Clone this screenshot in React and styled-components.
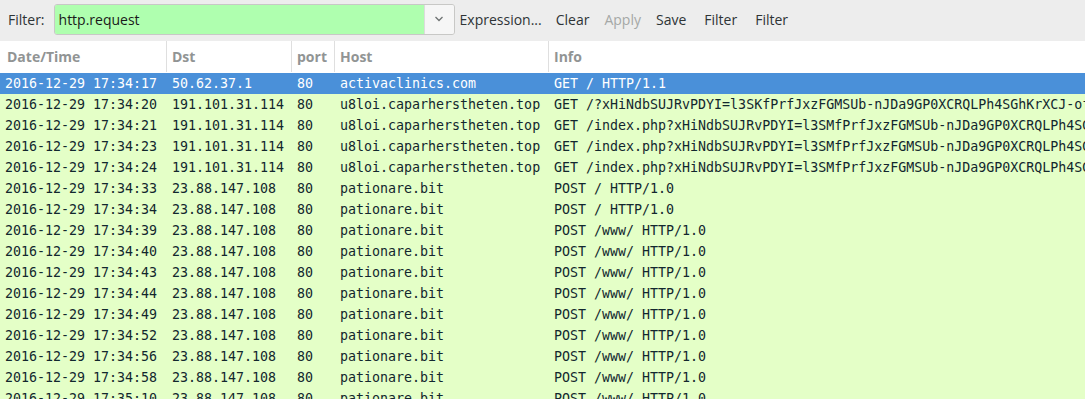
import React from "react";
import styled, { createGlobalStyle } from "styled-components";

const Global = createGlobalStyle`
  html, body { margin: 0; padding: 0; background: #ffffff; }
  body { overflow: hidden; }
`;

const Page = styled.div`
  width: 1085px;
  height: 399px;
  overflow: hidden;
  display: flex;
  flex-direction: column;
  background: #ffffff;
`;

const Toolbar = styled.div`
  height: 41px;
  flex: none;
  background: #ededed;
  display: flex;
  align-items: center;
  padding: 0 0 0 8px;
  font-family: "Open Sans", sans-serif;
  font-size: 14px;
  color: #2e3436;
  box-sizing: border-box;
`;

const Label = styled.span`
  margin-right: 9px;
  margin-top: -3px;
`;

const Combo = styled.div`
  display: flex;
  height: 31px;
  margin-top: -3px;
  border: 1px solid #c8c8c6;
  border-radius: 3px;
  overflow: hidden;
  box-sizing: border-box;
`;

const Input = styled.div`
  width: 369px;
  background: #afffaf;
  display: flex;
  align-items: center;
  padding-left: 4px;
  box-sizing: border-box;
  color: #1a1a1a;
`;

const Arrow = styled.div`
  width: 29px;
  background: #f6f6f6;
  border-left: 1px solid #dcdcdc;
  display: flex;
  align-items: center;
  justify-content: center;
`;

const Buttons = styled.div`
  display: flex;
  align-items: center;
  margin-left: 5px;
  margin-top: -3px;
`;

const Btn = styled.span`
  color: ${(p) => (p.$disabled ? "#a5a8a6" : "#2e3436")};
  margin-right: ${(p) => p.$mr || 15}px;
  white-space: nowrap;
`;

const Header = styled.div`
  height: 32px;
  flex: none;
  display: flex;
  background: #ffffff;
  box-sizing: border-box;
  font-family: "Open Sans", sans-serif;
  font-weight: 700;
  font-size: 14px;
  color: #919494;
`;

const HeadCell = styled.div`
  width: ${(p) => (p.$w ? p.$w + "px" : "auto")};
  flex: ${(p) => (p.$w ? "none" : "1")};
  box-sizing: border-box;
  padding-left: ${(p) => p.$pl || 5}px;
  display: flex;
  align-items: center;
  border-right: ${(p) => (p.$last ? "none" : "1px solid #dfdfdf")};
  margin: 0 0 1px 0;
`;

const Rows = styled.div`
  display: flex;
  flex-direction: column;
  font-family: "DejaVu Sans Mono", monospace;
  font-size: 13.3px;
`;

const Row = styled.div`
  height: 21px;
  flex: none;
  display: flex;
  align-items: center;
  background: ${(p) => (p.$sel ? "#4a90d9" : "#e4ffc7")};
  color: ${(p) => (p.$sel ? "#ffffff" : "#12272e")};
  white-space: pre;
`;

const Cell = styled.div`
  width: ${(p) => (p.$w ? p.$w + "px" : "auto")};
  flex: ${(p) => (p.$w ? "none" : "1")};
  box-sizing: border-box;
  padding-left: 5px;
  overflow: hidden;
  white-space: pre;
`;

const cols = [167, 125, 43, 214];

const long1 =
  "GET /?xHiNdbSUJRvPDYI=l3SKfPrfJxzFGMSUb-nJDa9GP0XCRQLPh4SGhKrXCJ-ofQ2rT8vW HTTP/1.1";
const long2 =
  "GET /index.php?xHiNdbSUJRvPDYI=l3SMfPrfJxzFGMSUb-nJDa9GP0XCRQLPh4SGhKrXCJ HTTP/1.1";

const C = "u8loi.caparherstheten.top";
const P = "pationare.bit";
const D2 = "191.101.31.114";
const D3 = "23.88.147.108";

const data = [
  ["17:34:17", "50.62.37.1", "activaclinics.com", "GET / HTTP/1.1"],
  ["17:34:20", D2, C, long1],
  ["17:34:21", D2, C, long2],
  ["17:34:23", D2, C, long2],
  ["17:34:24", D2, C, long2],
  ["17:34:33", D3, P, "POST / HTTP/1.0"],
  ["17:34:34", D3, P, "POST / HTTP/1.0"],
  ["17:34:39", D3, P, "POST /www/ HTTP/1.0"],
  ["17:34:40", D3, P, "POST /www/ HTTP/1.0"],
  ["17:34:43", D3, P, "POST /www/ HTTP/1.0"],
  ["17:34:44", D3, P, "POST /www/ HTTP/1.0"],
  ["17:34:49", D3, P, "POST /www/ HTTP/1.0"],
  ["17:34:52", D3, P, "POST /www/ HTTP/1.0"],
  ["17:34:56", D3, P, "POST /www/ HTTP/1.0"],
  ["17:34:58", D3, P, "POST /www/ HTTP/1.0"],
  ["17:35:10", D3, P, "POST /www/ HTTP/1.0"],
];

export default function App() {
  return (
    <Page>
      <Global />
      <Toolbar>
        <Label>Filter:</Label>
        <Combo>
          <Input>http.request</Input>
          <Arrow>
            <svg width="10" height="6" viewBox="0 0 10 6">
              <path d="M1.5 1 L5 4.5 L8.5 1" fill="none" stroke="#6f7373" strokeWidth="1.3" />
            </svg>
          </Arrow>
        </Combo>
        <Buttons>
          <Btn $mr={14}>Expression...</Btn>
          <Btn $mr={15}>Clear</Btn>
          <Btn $mr={15} $disabled>Apply</Btn>
          <Btn $mr={18}>Save</Btn>
          <Btn $mr={18}>Filter</Btn>
          <Btn>Filter</Btn>
        </Buttons>
      </Toolbar>
      <Header>
        <HeadCell $w={cols[0]} $pl={7}>Date/Time</HeadCell>
        <HeadCell $w={cols[1]}>Dst</HeadCell>
        <HeadCell $w={cols[2]}>port</HeadCell>
        <HeadCell $w={cols[3]}>Host</HeadCell>
        <HeadCell $last>Info</HeadCell>
      </Header>
      <Rows>
        {data.map((r, i) => (
          <Row key={i} $sel={i === 0}>
            <Cell $w={cols[0]}>{"2016-12-29 " + r[0]}</Cell>
            <Cell $w={cols[1]}>{r[1]}</Cell>
            <Cell $w={cols[2]}>80</Cell>
            <Cell $w={cols[3]}>{r[2]}</Cell>
            <Cell>{r[3]}</Cell>
          </Row>
        ))}
      </Rows>
    </Page>
  );
}
